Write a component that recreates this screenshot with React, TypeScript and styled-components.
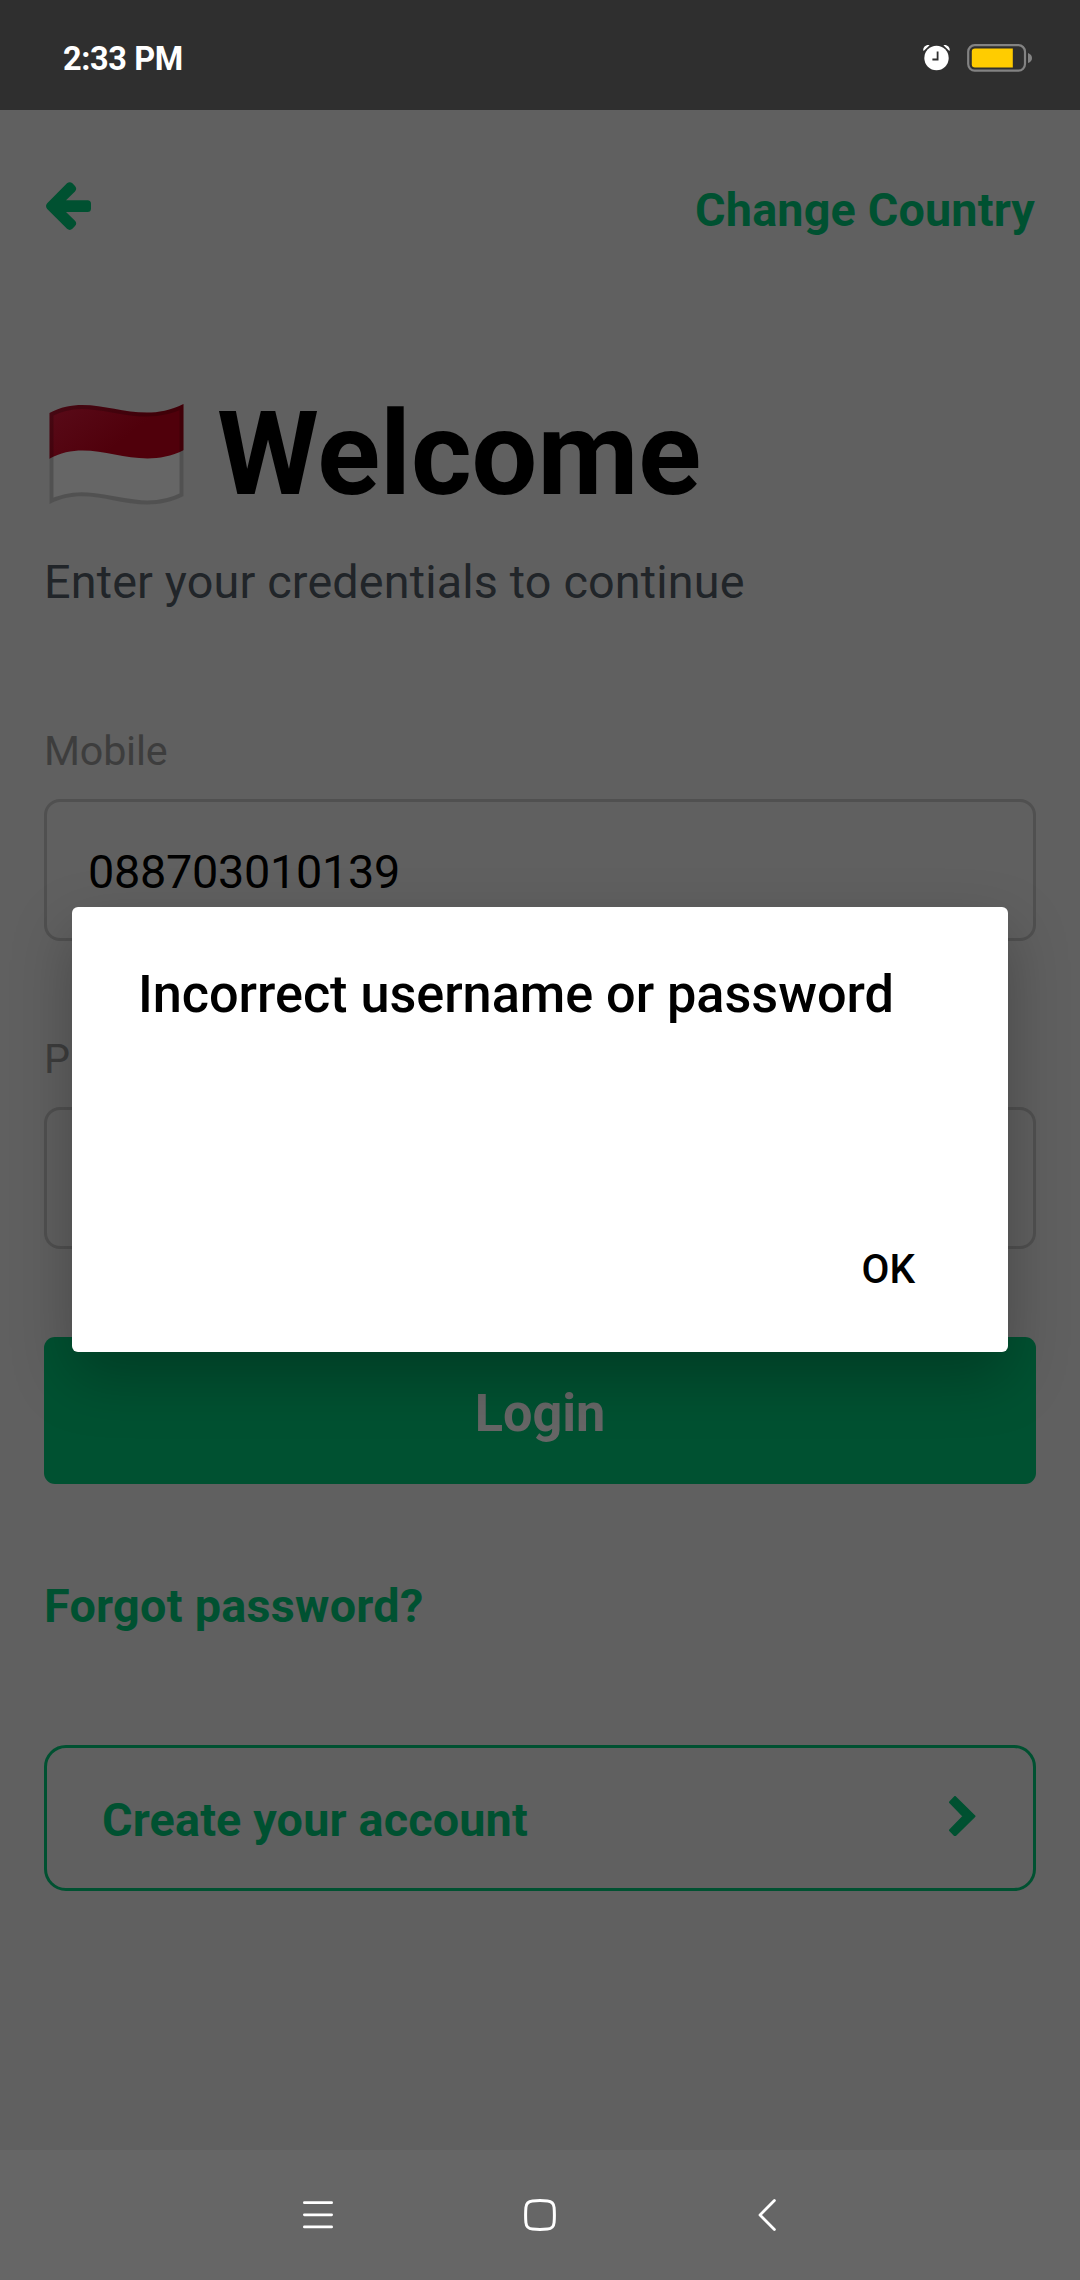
import React from "react";
import styled, { createGlobalStyle } from "styled-components";

const color = {
  page: "#606060",
  statusBar: "#2f2f2f",
  navBar: "#666666",
  green: "#005131",
  border: "#505050",
  label: "#3d3d3d",
  subtitle: "#212529",
};

const GlobalStyle = createGlobalStyle`
  * { box-sizing: border-box; }
  body { margin: 0; background: ${color.page}; }
  button { font: inherit; color: inherit; background: none; border: 0; padding: 0; margin: 0; }
  svg { display: block; flex: none; }
`;

const Screen = styled.div`
  position: relative;
  display: flex;
  flex-direction: column;
  width: 1080px;
  height: 2280px;
  overflow: hidden;
  background: ${color.page};
  font-family: Roboto, "Liberation Sans", sans-serif;
  color: #000;
`;

const StatusBar = styled.div`
  display: flex;
  align-items: center;
  justify-content: space-between;
  height: 110px;
  padding: 7px 48px 0 63px;
  background: ${color.statusBar};
`;

const Clock = styled.span`
  padding-top: 1px;
  color: #fff;
  font-size: 32.5px;
  font-weight: 700;
  letter-spacing: -0.4px;
  line-height: 40px;
`;

const StatusIcons = styled.div`
  display: flex;
  align-items: center;
  gap: 17px;
  margin-bottom: 2px;
`;

const Page = styled.main`
  flex: 1;
  display: flex;
  flex-direction: column;
  padding: 0 44px;
`;

const Header = styled.header`
  display: flex;
  align-items: center;
  justify-content: space-between;
  height: 200px;
  padding-right: 1px;
`;

const BackButton = styled.button`
  padding: 0 0 8px 2px;
`;

const Link = styled.a<{ $tracking?: number }>`
  color: ${color.green};
  font-size: 46.75px;
  font-weight: 700;
  letter-spacing: ${({ $tracking = 0.15 }) => $tracking}px;
  line-height: 56px;
`;

const Heading = styled.h1`
  display: flex;
  align-items: center;
  gap: 33px;
  margin: 84px 0 0;
  padding-left: 5px;
  height: 121px;
  font-size: 116.5px;
  font-weight: 700;
  line-height: 121px;
`;

const Subtitle = styled.p`
  margin: 39px 0 116px;
  color: ${color.subtitle};
  font-size: 46.75px;
  letter-spacing: 0.15px;
  line-height: 56px;
`;

const Field = styled.label`
  display: flex;
  flex-direction: column;
  gap: 23px;
  margin-bottom: 93px;
`;

const FieldLabel = styled.span`
  color: ${color.label};
  font-size: 41.25px;
  letter-spacing: -0.2px;
  line-height: 50px;
`;

const FieldBox = styled.div`
  display: flex;
  align-items: center;
  height: 142px;
  padding: 3px 41px 0;
  border: 3px solid ${color.border};
  border-radius: 16px;
  font-size: 46.75px;
  letter-spacing: -0.28px;
  line-height: 56px;
`;

const LoginButton = styled.button`
  height: 147px;
  margin-top: -5px;
  padding-top: 7px;
  border-radius: 11px;
  background: ${color.green};
  color: ${color.navBar};
  font-size: 52.25px;
  font-weight: 700;
  line-height: 62px;
`;

const ForgotRow = styled.div`
  display: flex;
  margin: 94px 0 111px;
`;

const CreateButton = styled.button`
  display: flex;
  align-items: center;
  justify-content: space-between;
  height: 146px;
  padding: 0 57.5px 0 55px;
  border: 3px solid ${color.green};
  border-radius: 22px;
`;

const CreateLabel = styled(Link).attrs({ as: "span" })`
  padding-top: 4px;
`;

const ChevronSlot = styled.span`
  padding-bottom: 4px;
`;

const NavBar = styled.nav`
  display: flex;
  align-items: center;
  height: 130px;
  padding-left: 302px;
  background: ${color.navBar};
`;

const NavItem = styled.span<{ $gap?: number }>`
  margin-right: ${({ $gap = 0 }) => $gap}px;
`;

const Overlay = styled.div`
  position: absolute;
  inset: 0;
  display: flex;
  justify-content: center;
  align-items: flex-start;
  padding-top: 907px;
`;

const Dialog = styled.div`
  display: flex;
  flex-direction: column;
  justify-content: space-between;
  width: 936px;
  height: 445px;
  padding: 56px 93px 58px 66px;
  border-radius: 6px;
  background: #fff;
  box-shadow: 0 24px 60px rgba(0, 0, 0, 0.26);
`;

const DialogTitle = styled.h2`
  margin: 0;
  font-size: 52.25px;
  font-weight: 500;
  letter-spacing: -0.05px;
  line-height: 64px;
  white-space: nowrap;
`;

const DialogAction = styled.button`
  align-self: flex-end;
  font-size: 40.5px;
  font-weight: 500;
  line-height: 50px;
`;

const AlarmIcon = () => (
  <svg width="27" height="27" viewBox="0 0 27 27">
    <circle cx="13.5" cy="14" r="12.2" fill="#fff" />
    <path d="M0.2 6.6C0 3 3 .4 6.6 1.2L0.9 6.8ZM26.8 6.6C27 3 24 .4 20.4 1.2L26.1 6.8Z" fill="#fff" />
    <path d="M14.6 7.4V15.5H9.4" fill="none" stroke={color.statusBar} strokeWidth="1.8" />
  </svg>
);

const BatteryIcon = () => (
  <svg width="65" height="28" viewBox="0 0 65 28">
    <rect x="1.2" y="1.2" width="56.8" height="25.4" rx="6.5" fill="none" stroke="#838383" strokeWidth="2.2" />
    <path d="M8 4.6H45.8V23.4H8Q4.8 23.4 4.8 20.2V7.8Q4.8 4.6 8 4.6Z" fill="#ffcc00" />
    <path d="M61 9Q65 10.5 65 14T61 19Z" fill="#838383" />
  </svg>
);

const BackArrowIcon = () => (
  <svg width="45" height="48" viewBox="0 0 45 48" fill={color.green}>
    <path d="M1.2 21.2L21 1.3Q23.8 -1 26.4 1.3L29 4Q31.4 6.8 29 9.5L20 18.2H41.5Q45 18.2 45 21.7V26.6Q45 30.1 41.5 30.1H20L29 38.7Q31.4 41.4 29 44.1L26.4 46.8Q23.8 49.1 21 46.8L1.2 27Q-1.2 24.1 1.2 21.2Z" />
  </svg>
);

const FlagIcon = () => (
  <svg width="135" height="101" viewBox="0 0 135 101">
    <defs>
      <linearGradient id="red" x1="0" y1="0" x2="1" y2="0.5">
        <stop offset="0" stopColor="#590b19" />
        <stop offset="0.7" stopColor="#50000b" />
      </linearGradient>
      <clipPath id="cloth">
        <path d="M0.5 9C45 -15 85 25 134.5 0V92C85 117 45 76 0.5 100Z" />
      </clipPath>
    </defs>
    <g clipPath="url(#cloth)">
      <rect width="135" height="101" fill="#666" />
      <path d="M0 0H135V46C85 71 45 30 0 55Z" fill="url(#red)" />
      <path d="M0.5 9C45 -15 85 25 134.5 0V92C85 117 45 76 0.5 100Z" fill="none" stroke="#000" strokeOpacity=".2" strokeWidth="8" />
    </g>
  </svg>
);

const ChevronIcon = () => (
  <svg width="26.5" height="40.5" viewBox="0 0 26.5 40.5">
    <path d="M6 1L25.5 20.2L6 39.5L1 34.2L14.6 20.2L1 6.2Z" fill={color.green} stroke={color.green} strokeWidth="2" strokeLinejoin="round" />
  </svg>
);

const MenuIcon = () => (
  <svg width="32" height="32" viewBox="0 0 32 32" stroke="#fff" strokeWidth="2.8" strokeLinecap="round">
    <path d="M2.4 3.7H29.6M2.4 15.8H29.6M2.4 27.9H29.6" />
  </svg>
);

const HomeIcon = () => (
  <svg width="32" height="32" viewBox="0 0 32 32" fill="none" stroke="#fff" strokeWidth="3">
    <path d="M8.5 1.9Q16 1.3 23.5 1.9Q29.6 2.4 30.1 8.5Q30.7 16 30.1 23.5Q29.6 29.6 23.5 30.1Q16 30.7 8.5 30.1Q2.4 29.6 1.9 23.5Q1.3 16 1.9 8.5Q2.4 2.4 8.5 1.9Z" />
  </svg>
);

const NavBackIcon = () => (
  <svg width="19" height="32" viewBox="0 0 19 32" fill="none" stroke="#fff" strokeWidth="2.8" strokeLinecap="round" strokeLinejoin="round">
    <path d="M16.4 1.6L2 16L16.4 30.4" />
  </svg>
);

export default function App() {
  return (
    <Screen>
      <GlobalStyle />
      <StatusBar>
        <Clock>2:33 PM</Clock>
        <StatusIcons>
          <AlarmIcon />
          <BatteryIcon />
        </StatusIcons>
      </StatusBar>

      <Page>
        <Header>
          <BackButton aria-label="Back">
            <BackArrowIcon />
          </BackButton>
          <Link>Change Country</Link>
        </Header>

        <Heading>
          <FlagIcon />
          <span>Welcome</span>
        </Heading>
        <Subtitle>Enter your credentials to continue</Subtitle>

        <Field>
          <FieldLabel>Mobile</FieldLabel>
          <FieldBox>088703010139</FieldBox>
        </Field>
        <Field>
          <FieldLabel>P</FieldLabel>
          <FieldBox />
        </Field>

        <LoginButton>Login</LoginButton>

        <ForgotRow>
          <Link $tracking={0.27}>Forgot password?</Link>
        </ForgotRow>

        <CreateButton>
          <CreateLabel>Create your account</CreateLabel>
          <ChevronSlot>
            <ChevronIcon />
          </ChevronSlot>
        </CreateButton>
      </Page>

      <NavBar>
        <NavItem $gap={190}>
          <MenuIcon />
        </NavItem>
        <NavItem $gap={202}>
          <HomeIcon />
        </NavItem>
        <NavItem>
          <NavBackIcon />
        </NavItem>
      </NavBar>

      <Overlay>
        <Dialog role="alertdialog">
          <DialogTitle>Incorrect username or password</DialogTitle>
          <DialogAction>OK</DialogAction>
        </Dialog>
      </Overlay>
    </Screen>
  );
}
